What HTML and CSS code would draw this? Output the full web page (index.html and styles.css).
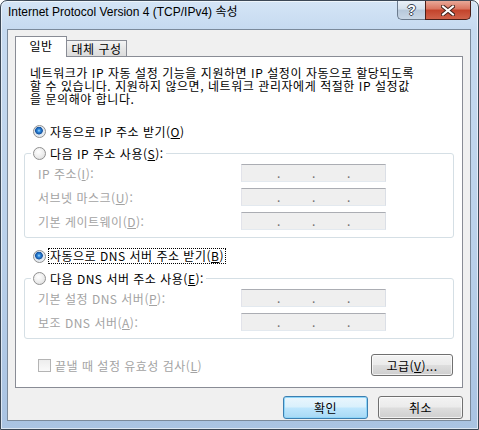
FILE: index.html
```html
<!DOCTYPE html>
<html lang="ko">
<head>
    <meta charset="UTF-8">
    <meta name="viewport" content="width=device-width, initial-scale=1.0">
    <title>Internet Protocol Version 4 (TCP/IPv4) 속성</title>
    <link rel="stylesheet" href="styles.css">
</head>
<body>
    <div class="window">
        <div class="titlebar">
            <span class="title">Internet Protocol Version 4 (TCP/IPv4) 속성</span>
            <div class="caption-buttons">
                <div class="cap cap-help"><span>?</span></div>
                <div class="cap cap-close">
                    <svg width="14" height="11" viewBox="0 0 14 11">
                        <path d="M2 1.5 L12 9.5 M12 1.5 L2 9.5" stroke="#40211a" stroke-width="4" stroke-linecap="square"/>
                        <path d="M2 1.5 L12 9.5 M12 1.5 L2 9.5" stroke="#ffffff" stroke-width="2" stroke-linecap="square"/>
                    </svg>
                </div>
            </div>
        </div>

        <div class="client">
            <div class="tabs">
                <div class="tab tab-active">일반</div>
                <div class="tab">대체 구성</div>
            </div>

            <div class="panel">
                <p class="desc">네트워크가 IP 자동 설정 기능을 지원하면 IP 설정이 자동으로 할당되도록<br>할 수 있습니다. 지원하지 않으면, 네트워크 관리자에게 적절한 IP 설정값<br>을 문의해야 합니다.</p>

                <div class="radio-row first">
                    <span class="radio-mark checked"></span>
                    <span>자동으로 IP 주소 받기(<u>O</u>)</span>
                </div>

                <fieldset class="group">
                    <legend class="radio-row">
                        <span class="radio-mark"></span>
                        <span>다음 IP 주소 사용(<u>S</u>):</span>
                    </legend>
                    <div class="fields">
                        <span class="field-label">IP 주소(<u>I</u>):</span>
                        <div class="ip-box"><span></span><span>.</span><span></span><span>.</span><span></span><span>.</span><span></span></div>
                        <span class="field-label">서브넷 마스크(<u>U</u>):</span>
                        <div class="ip-box"><span></span><span>.</span><span></span><span>.</span><span></span><span>.</span><span></span></div>
                        <span class="field-label">기본 게이트웨이(<u>D</u>):</span>
                        <div class="ip-box"><span></span><span>.</span><span></span><span>.</span><span></span><span>.</span><span></span></div>
                    </div>
                </fieldset>

                <div class="radio-row dns-auto">
                    <span class="radio-mark checked"></span>
                    <span class="focus">자동으로 DNS 서버 주소 받기(<u>B</u>)</span>
                </div>

                <fieldset class="group">
                    <legend class="radio-row">
                        <span class="radio-mark"></span>
                        <span>다음 DNS 서버 주소 사용(<u>E</u>):</span>
                    </legend>
                    <div class="fields">
                        <span class="field-label">기본 설정 DNS 서버(<u>P</u>):</span>
                        <div class="ip-box"><span></span><span>.</span><span></span><span>.</span><span></span><span>.</span><span></span></div>
                        <span class="field-label">보조 DNS 서버(<u>A</u>):</span>
                        <div class="ip-box"><span></span><span>.</span><span></span><span>.</span><span></span><span>.</span><span></span></div>
                    </div>
                </fieldset>

                <div class="bottom-row">
                    <label class="check-row">
                        <span class="check-mark"></span>
                        <span>끝낼 때 설정 유효성 검사(<u>L</u>)</span>
                    </label>
                    <button class="btn btn-advanced">고급(<u>V</u>)...</button>
                </div>
            </div>

            <div class="dialog-buttons">
                <button class="btn btn-default">확인</button>
                <button class="btn">취소</button>
            </div>
        </div>
    </div>
</body>
</html>
```

FILE: styles.css
```css
body {
    margin: 0;
    font-family: "Noto Sans CJK KR", "Liberation Sans", sans-serif;
    font-size: 12px;
    color: #000;
}

.window {
    width: 479px;
    height: 430px;
    box-sizing: border-box;
    border: 1px solid #3c4856;
    border-radius: 7px 7px 0 0;
    background: linear-gradient(180deg, #d4e5f6 0, #c6daf0 28px, #b9d0ea 60%, #a9c3e2 100%);
    box-shadow: inset 0 0 0 1px rgba(255,255,255,0.6);
    padding: 0 7px 8px 6px;
    display: flex;
    flex-direction: column;
}

.titlebar {
    height: 28px;
    display: flex;
    align-items: flex-start;
    flex-shrink: 0;
}

.title {
    font-family: "Liberation Sans", "Noto Sans CJK KR", sans-serif;
    font-size: 12px;
    line-height: 14px;
    margin: 4px 0 0 1px;
    white-space: nowrap;
}

.caption-buttons {
    margin-left: auto;
    display: flex;
}

.cap {
    height: 19px;
    box-sizing: border-box;
    display: flex;
    align-items: center;
    justify-content: center;
}

.cap-help {
    width: 28px;
    border: 1px solid #6b7b8d;
    border-top: none;
    border-right: none;
    border-radius: 0 0 0 5px;
    background: linear-gradient(180deg, #e9f0f8 0, #d4e0ec 45%, #b7c8da 50%, #c9d7e6 100%);
}

.cap-help span {
    font-family: "Liberation Sans", sans-serif;
    font-weight: bold;
    font-size: 14px;
    line-height: 14px;
    color: #fff;
    text-shadow: 1px 0 0 #3a4654, -1px 0 0 #3a4654, 0 1px 0 #3a4654, 0 -1px 0 #3a4654;
}

.cap-close {
    width: 46px;
    border: 1px solid #4a1f18;
    border-top: none;
    border-radius: 0 0 5px 0;
    background: linear-gradient(180deg, #e8a898 0, #d9745f 45%, #c3432b 50%, #d0624a 100%);
}

.client {
    flex: 1;
    border: 1px solid #7b8a9b;
    background: #f0f0f0;
    padding: 6px 7px 1px 7px;
    display: flex;
    flex-direction: column;
}

.tabs {
    display: flex;
    align-items: flex-end;
    height: 20px;
    flex-shrink: 0;
    letter-spacing: 0.5px;
}

.tab {
    box-sizing: border-box;
    height: 16px;
    width: 61px;
    margin-left: -1px;
    border: 1px solid #898c95;
    border-bottom: none;
    background: linear-gradient(180deg, #f4f4f4 0, #e6e6e6 50%, #dcdcdc 100%);
    text-align: center;
    line-height: 15px;
}

.tab-active {
    position: relative;
    z-index: 1;
    width: 52px;
    height: 21px;
    margin-left: 0;
    margin-bottom: -1px;
    background: #fff;
    line-height: 18px;
}

.panel {
    flex: 1;
    border: 1px solid #898c95;
    background: #fff;
    display: flex;
    flex-direction: column;
    letter-spacing: 0.5px;
}

.desc {
    margin: 9px 0 0 14px;
    line-height: 13px;
    letter-spacing: 0.55px;
    white-space: nowrap;
}

.radio-row {
    display: flex;
    align-items: center;
    gap: 4px;
    height: 16px;
    white-space: nowrap;
}

.radio-row.first {
    margin: 18px 0 0 17px;
}

.radio-row.dns-auto {
    margin: 10px 0 0 17px;
    gap: 2px;
}

.radio-mark {
    width: 13px;
    height: 13px;
    box-sizing: border-box;
    border-radius: 50%;
    border: 1px solid #909090;
    background: radial-gradient(circle at 40% 35%, #ffffff 0, #ececec 55%, #d6d6d6 100%);
    flex-shrink: 0;
}

.radio-mark.checked {
    background: radial-gradient(circle at 45% 42%, #a8dcff 0, #2f8ade 1.5px, #15529f 3.5px, #dfe7ef 4.2px, #f4f4f4 100%);
}

.focus {
    border: 1px dotted #000;
    padding: 0 1px;
    line-height: 14px;
}

.group {
    width: 430px;
    box-sizing: border-box;
    margin: 6px 0 0 8px;
    padding: 0 6px 7px 6px;
    border: 1px solid #d5dfe5;
    border-radius: 3px;
    min-inline-size: 0;
}

.group legend {
    padding: 0 2px;
}

.fields {
    display: grid;
    grid-template-columns: 203px 145px;
    grid-auto-rows: 18px;
    row-gap: 6px;
    align-items: center;
    margin: 3px 0 0 7px;
    color: #a3a3a3;
    white-space: nowrap;
}

.ip-box {
    height: 18px;
    box-sizing: border-box;
    border: 1px solid #e3e9ef;
    border-top-color: #abadb3;
    border-left-color: #e2e3ea;
    border-right-color: #dbdfe6;
    background: #efefef;
    display: grid;
    grid-template-columns: 35px 3px 32px 3px 32px 3px 1fr;
    color: #6d6d6d;
    line-height: 15px;
    letter-spacing: 0;
}

.bottom-row {
    display: flex;
    align-items: center;
    justify-content: space-between;
    margin: 15px 9px 0 22px;
}

.check-row {
    display: flex;
    align-items: center;
    gap: 4px;
    color: #a3a3a3;
    white-space: nowrap;
}

.check-mark {
    width: 13px;
    height: 13px;
    box-sizing: border-box;
    border: 1px solid #b4b4b4;
    background: linear-gradient(180deg, #ededed, #fafafa);
}

.btn {
    height: 23px;
    width: 85px;
    box-sizing: border-box;
    border: 1px solid #707070;
    border-radius: 3px;
    background: linear-gradient(180deg, #f3f3f3 0, #ebebeb 48%, #dddddd 52%, #cfcfcf 100%);
    box-shadow: inset 0 0 0 1px rgba(255,255,255,0.7);
    font-family: "Noto Sans CJK KR", "Liberation Sans", sans-serif;
    font-size: 12px;
    letter-spacing: 0.5px;
    color: #000;
    padding: 0;
    cursor: pointer;
}

.btn-advanced {
    width: 82px;
    height: 22px;
}

.btn-default {
    border-color: #3c7fb1;
    background: linear-gradient(180deg, #eaf6fd 0, #d9f0fc 48%, #bee6fd 52%, #a7d9f5 100%);
    box-shadow: inset 0 0 0 1px #8fd6f9;
}

.dialog-buttons {
    display: flex;
    justify-content: flex-end;
    gap: 10px;
    margin-top: 8px;
    flex-shrink: 0;
}
```
